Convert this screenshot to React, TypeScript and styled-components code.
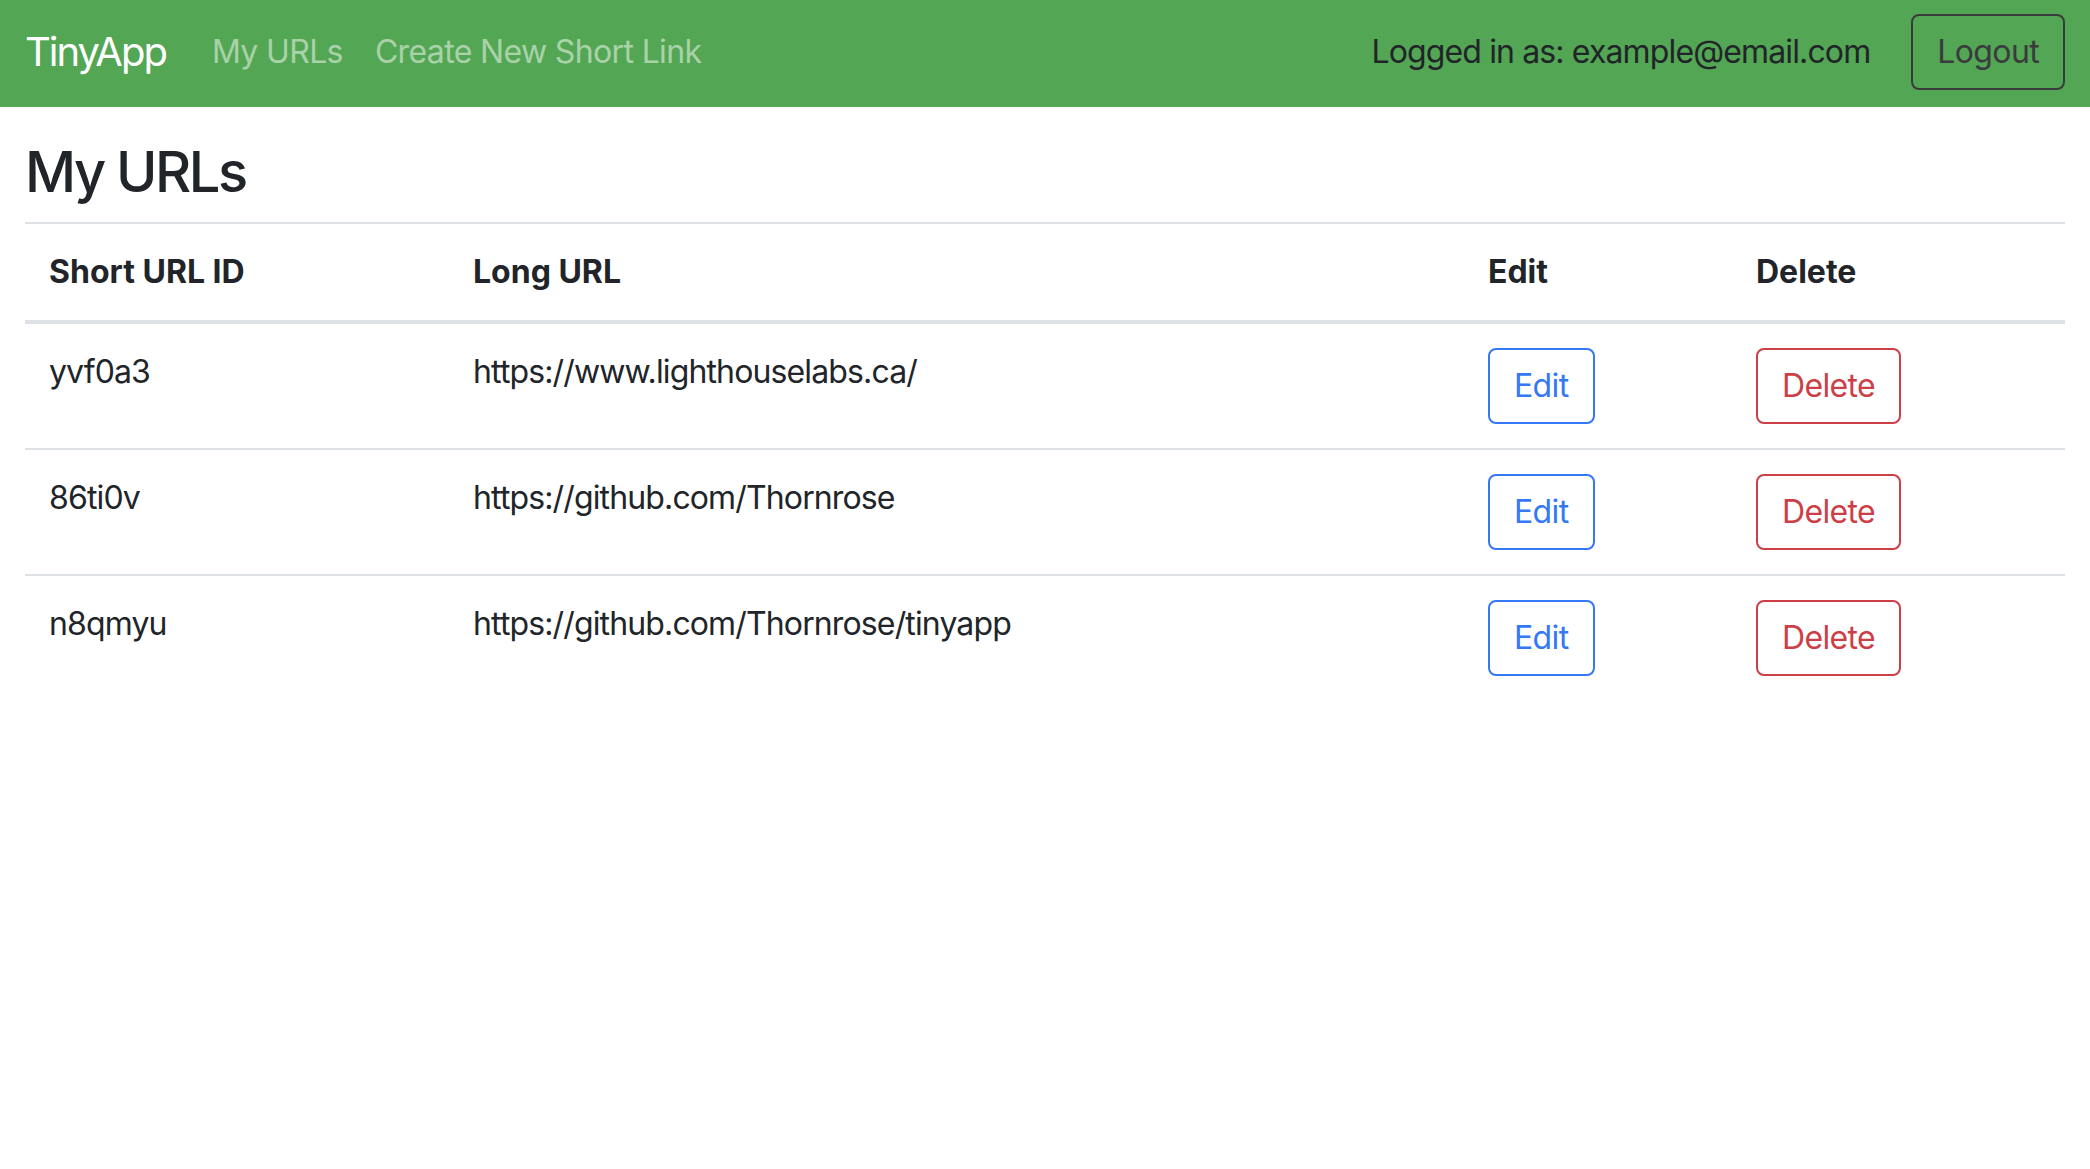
import React from "react";
import styled, { createGlobalStyle } from "styled-components";

const GlobalStyle = createGlobalStyle`
  *, *::before, *::after { box-sizing: border-box; }
  html, body { margin: 0; padding: 0; background: #ffffff; }
  body {
    font-family: Inter, "Noto Sans", sans-serif;
    font-size: 32px;
    line-height: 1.5;
    color: #212529;
    letter-spacing: -0.027em;
  }
`;

const Navbar = styled.nav`
  height: 107px;
  background: #53a653;
  display: flex;
  align-items: center;
  padding: 0 25px 4px;
`;

const Brand = styled.a`
  font-size: 40px;
  line-height: 60px;
  color: #ffffff;
  margin-right: 30px;
  text-decoration: none;
  letter-spacing: -0.05em;
`;

const NavLinks = styled.div`
  display: flex;
  align-items: center;
`;

const NavLink = styled.a`
  padding: 0 16px;
  font-size: 32px;
  line-height: 48px;
  color: rgba(255, 255, 255, 0.5);
  text-decoration: none;
  letter-spacing: -0.02em;
`;

const NavRight = styled.div`
  margin-left: auto;
  display: flex;
  align-items: center;
  gap: 41px;
`;

const UserText = styled.span`
  color: #212529;
  font-size: 32px;
  line-height: 48px;
`;

type Variant = "primary" | "danger" | "dark";
const variantColor: Record<Variant, string> = {
  primary: "#3478f6",
  danger: "#cc3f47",
  dark: "#3a3b3f",
};

const OutlineButton = styled.button<{ $variant: Variant }>`
  display: inline-block;
  font-family: inherit;
  letter-spacing: -0.02em;
  font-size: 32px;
  line-height: 48px;
  padding: 12px 24px;
  background: transparent;
  border: 2px solid ${(p) => variantColor[p.$variant]};
  color: ${(p) => variantColor[p.$variant]};
  border-radius: 8px;
  cursor: pointer;
`;

const Main = styled.main`
  padding: 0 25px;
`;

const Title = styled.h3`
  margin: 32px 0 16px;
  font-size: 56px;
  font-weight: 500;
  line-height: 1.2;
  letter-spacing: -0.045em;
`;

const Table = styled.table`
  width: 100%;
  border-collapse: collapse;
  table-layout: fixed;
`;

const HeadCell = styled.th`
  text-align: left;
  font-weight: 700;
  padding: 24px;
  vertical-align: bottom;
  border-top: 2px solid #dee2e6;
  border-bottom: 4px solid #dee2e6;
  line-height: 48px;
  letter-spacing: 0;
`;

const Cell = styled.td`
  padding: 24px;
  vertical-align: top;
  border-top: 2px solid #dee2e6;
  line-height: 48px;
`;

const urls = [
  { id: "yvf0a3", long: "https://www.lighthouselabs.ca/" },
  { id: "86ti0v", long: "https://github.com/Thornrose" },
  { id: "n8qmyu", long: "https://github.com/Thornrose/tinyapp" },
];

export default function App() {
  return (
    <>
      <GlobalStyle />
      <Navbar>
        <Brand>TinyApp</Brand>
        <NavLinks>
          <NavLink>My URLs</NavLink>
          <NavLink>Create New Short Link</NavLink>
        </NavLinks>
        <NavRight>
          <UserText>Logged in as: example@email.com</UserText>
          <OutlineButton $variant="dark">Logout</OutlineButton>
        </NavRight>
      </Navbar>
      <Main>
        <Title>My URLs</Title>
        <Table>
          <colgroup>
            <col style={{ width: 424 }} />
            <col style={{ width: 1015 }} />
            <col style={{ width: 268 }} />
            <col />
          </colgroup>
          <thead>
            <tr>
              <HeadCell>Short URL ID</HeadCell>
              <HeadCell>Long URL</HeadCell>
              <HeadCell>Edit</HeadCell>
              <HeadCell>Delete</HeadCell>
            </tr>
          </thead>
          <tbody>
            {urls.map((u) => (
              <tr key={u.id}>
                <Cell>{u.id}</Cell>
                <Cell>{u.long}</Cell>
                <Cell>
                  <OutlineButton $variant="primary">Edit</OutlineButton>
                </Cell>
                <Cell>
                  <OutlineButton $variant="danger">Delete</OutlineButton>
                </Cell>
              </tr>
            ))}
          </tbody>
        </Table>
      </Main>
    </>
  );
}
